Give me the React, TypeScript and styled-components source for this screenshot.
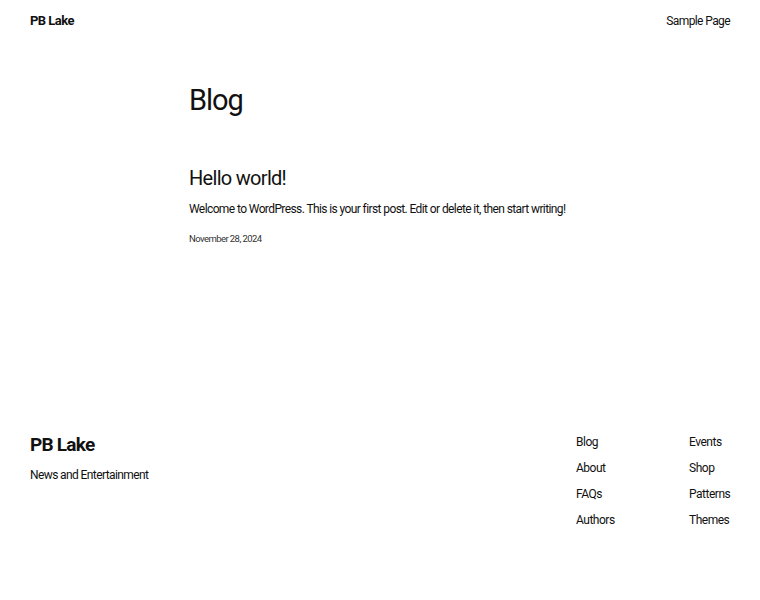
import React from 'react';
import styled, { createGlobalStyle } from 'styled-components';

const GlobalStyle = createGlobalStyle`
  html, body {
    margin: 0;
    padding: 0;
    background: #ffffff;
    color: #111111;
    font-family: Roboto, "Noto Sans", "Liberation Sans", sans-serif;
    -webkit-font-smoothing: antialiased;
  }
  a {
    color: inherit;
    text-decoration: none;
  }
`;

const Page = styled.div`
  width: 760px;
  min-height: 600px;
  display: flex;
  flex-direction: column;
`;

const Header = styled.header`
  display: flex;
  justify-content: space-between;
  align-items: center;
  height: 41px;
  padding: 0 30px;
`;

const SiteTitle = styled.a<{ $size: number }>`
  font-size: ${(p) => p.$size}px;
  font-weight: 700;
  letter-spacing: -0.04em;
`;

const NavLink = styled.a`
  font-size: 12px;
  letter-spacing: -0.05em;
`;

const Main = styled.main`
  width: 382px;
  margin: 0 auto;
  padding-top: 40px;
  height: 392px;
  box-sizing: border-box;
`;

const PageTitle = styled.h1`
  margin: 0;
  font-size: 29px;
  font-weight: 400;
  line-height: 38px;
  letter-spacing: -0.035em;
`;

const Post = styled.article`
  margin-top: 45px;
`;

const PostTitle = styled.h2`
  margin: 0;
  font-size: 20px;
  font-weight: 400;
  line-height: 28px;
  letter-spacing: -0.035em;
`;

const Excerpt = styled.p`
  margin: 8px 0 0;
  font-size: 12px;
  line-height: 18px;
  letter-spacing: -0.05em;
  white-space: nowrap;
`;

const PostDate = styled.div`
  margin-top: 15px;
  font-size: 9.5px;
  line-height: 12px;
  color: #333;
  letter-spacing: -0.06em;
`;

const Footer = styled.footer`
  display: flex;
  justify-content: space-between;
  padding: 0 30px;
`;

const Brand = styled.div`
  display: flex;
  flex-direction: column;
  gap: 10px;
`;

const Tagline = styled.p`
  margin: 0;
  font-size: 12px;
  line-height: 18px;
  letter-spacing: -0.05em;
`;

const LinkColumns = styled.nav`
  display: grid;
  grid-template-columns: 113px 41px;
`;

const LinkList = styled.ul`
  list-style: none;
  margin: 0;
  padding: 0;
  display: flex;
  flex-direction: column;
  gap: 8px;
`;

const FooterLink = styled.a`
  display: block;
  font-size: 12px;
  line-height: 18px;
  letter-spacing: -0.04em;
  white-space: nowrap;
`;

const columns = [
  ['Blog', 'About', 'FAQs', 'Authors'],
  ['Events', 'Shop', 'Patterns', 'Themes'],
];

export default function App() {
  return (
    <>
      <GlobalStyle />
      <Page>
        <Header>
          <SiteTitle href="#" $size={13}>PB Lake</SiteTitle>
          <NavLink href="#">Sample Page</NavLink>
        </Header>
        <Main>
          <PageTitle>Blog</PageTitle>
          <Post>
            <PostTitle>Hello world!</PostTitle>
            <Excerpt>Welcome to WordPress. This is your first post. Edit or delete it, then start writing!</Excerpt>
            <PostDate>November 28, 2024</PostDate>
          </Post>
        </Main>
        <Footer>
          <Brand>
            <SiteTitle href="#" $size={19}>PB Lake</SiteTitle>
            <Tagline>News and Entertainment</Tagline>
          </Brand>
          <LinkColumns>
            {columns.map((col, i) => (
              <LinkList key={i}>
                {col.map((label) => (
                  <li key={label}>
                    <FooterLink href="#">{label}</FooterLink>
                  </li>
                ))}
              </LinkList>
            ))}
          </LinkColumns>
        </Footer>
      </Page>
    </>
  );
}
